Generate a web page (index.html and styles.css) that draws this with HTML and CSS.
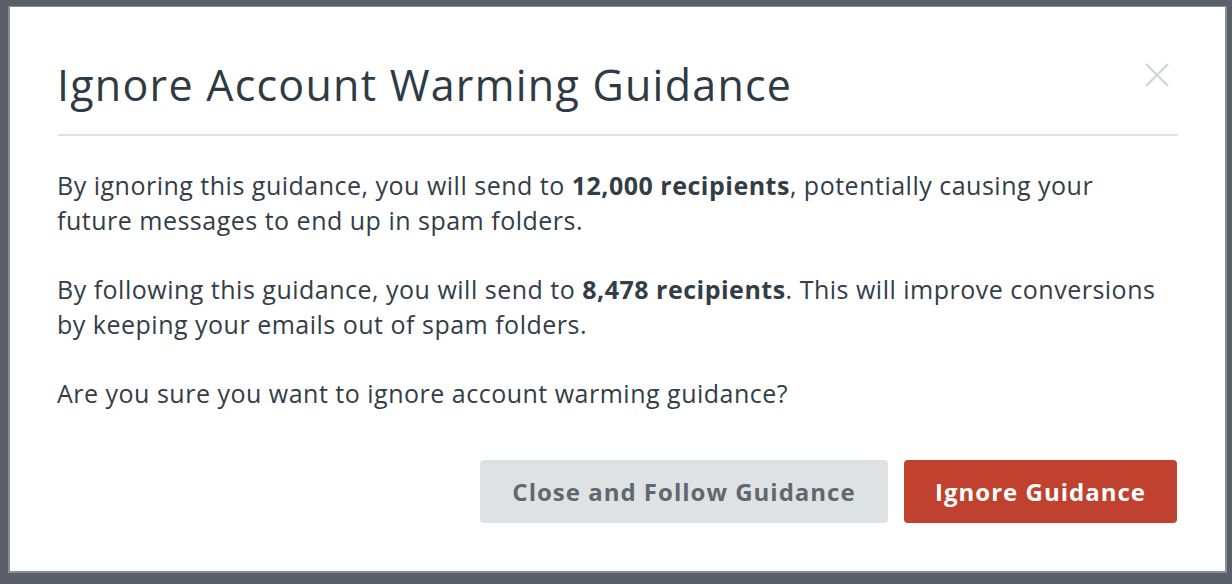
FILE: index.html
```html
<!DOCTYPE html>
<html lang="en">
<head>
<meta charset="utf-8">
<title>Ignore Account Warming Guidance</title>
<link rel="stylesheet" href="styles.css">
</head>
<body>
<div class="backdrop">
  <div class="modal" role="dialog" aria-labelledby="modal-title">
    <div class="modal-header">
      <h1 id="modal-title" class="modal-title">Ignore Account Warming Guidance</h1>
      <button class="modal-close" aria-label="Close">
        <svg width="24" height="24" viewBox="0 0 24 24" aria-hidden="true"><path d="M1 1 L23 23 M23 1 L1 23" stroke="#d3d5d8" stroke-width="2.4" fill="none"/></svg>
      </button>
    </div>
    <div class="modal-body">
      <p>By ignoring this guidance, you will send to <strong>12,000 recipients</strong>, potentially causing your future messages to end up in spam folders.</p>
      <p>By following this guidance, you will send to <strong>8,478 recipients</strong>. This will improve conversions by keeping your emails out of spam folders.</p>
      <p>Are you sure you want to ignore account warming guidance?</p>
    </div>
    <div class="modal-footer">
      <button class="btn btn-secondary">Close and Follow Guidance</button>
      <button class="btn btn-danger">Ignore Guidance</button>
    </div>
  </div>
</div>
</body>
</html>
```

FILE: styles.css
```css
* { box-sizing: border-box; }
html, body { margin: 0; padding: 0; }
body {
  width: 1232px;
  height: 584px;
  background: #5b5f69;
  font-family: "Open Sans", Lato, sans-serif;
  overflow: hidden;
}
.backdrop {
  padding: 6px 5px 11px 8px;
  height: 584px;
}
.modal {
  width: 1219px;
  height: 567px;
  background: #fff;
  border: 2px solid #8a8e95;
  border-top-width: 1px;
  display: flex;
  flex-direction: column;
  padding: 0 47px 0 48px;
}
.modal-header {
  display: flex;
  justify-content: space-between;
  align-items: flex-start;
  border-bottom: 2px solid #dfe1e4;
  padding-top: 56px;
  height: 129px;
}
.modal-title {
  margin: 0 0 0 -1px;
  font-size: 43px;
  font-weight: 400;
  color: #2f3a43;
  line-height: 1;
  letter-spacing: 1.25px;
}
.modal-close {
  background: none;
  border: 0;
  padding: 0;
  margin: 0 9px 0 0;
  width: 24px;
  height: 24px;
  cursor: pointer;
}
.modal-close svg { display: block; }
.modal-body {
  padding-top: 32px;
  padding-right: 3px;
  color: #333d46;
  font-size: 25px;
  line-height: 35px;
  letter-spacing: 0.5px;
}
.modal-body p { margin: 0 0 34px -1px; }
.modal-body strong { font-weight: 700; }
.modal-footer {
  display: flex;
  justify-content: flex-end;
  gap: 16px;
  margin-top: 15px;
  padding-right: 1px;
}
.btn {
  height: 63px;
  border: 0;
  border-radius: 4px;
  font-family: "Open Sans", Lato, sans-serif;
  font-size: 24px;
  font-weight: 700;
  letter-spacing: 1px;
  cursor: pointer;
}
.btn-secondary {
  width: 408px;
  background: #dfe2e5;
  color: #5f6870;
}
.btn-danger {
  width: 273px;
  background: #c0412d;
  color: #fff;
}
```
